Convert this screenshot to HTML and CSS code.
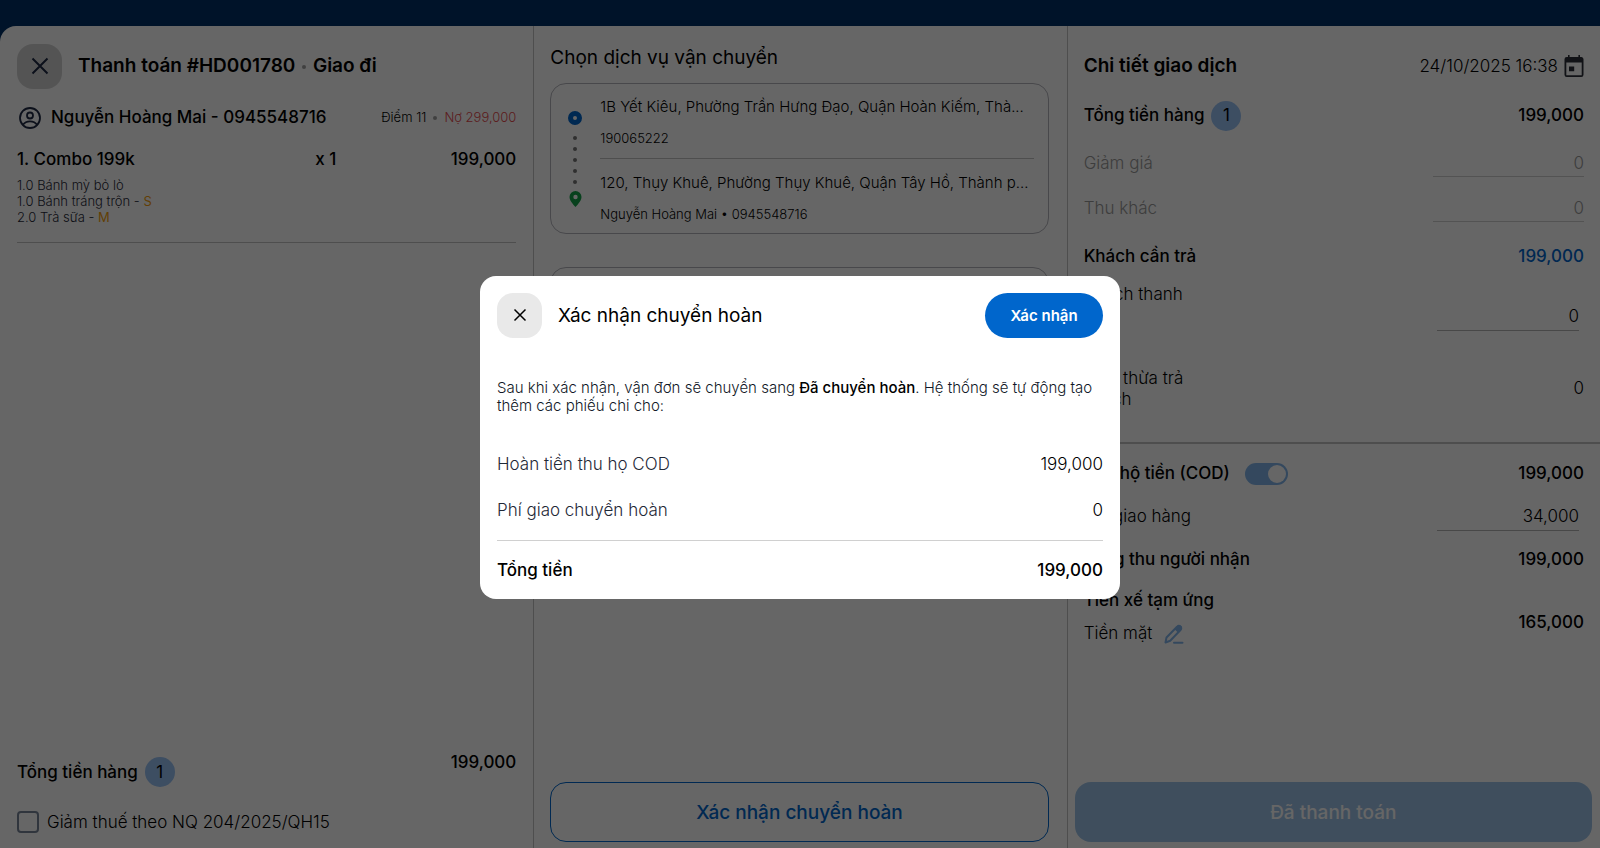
FILE: index.html
```html
<!DOCTYPE html>
<html lang="vi">
<head>
<meta charset="utf-8">
<meta name="viewport" content="width=device-width, initial-scale=1">
<title>Thanh toán #HD001780</title>
<link rel="stylesheet" href="styles.css">
</head>
<body>
<main class="sheet">
  <section class="col order">
    <header class="head">
      <button class="close" type="button" aria-label="Đóng"><svg width="20" height="20" viewBox="0 0 20 20"><path d="M2.500 2.500l15 15M17.500 2.500l-15 15"/></svg></button>
      <h1 class="title">Thanh toán #HD001780 <span class="dot"></span> Giao đi</h1>
    </header>
    <div class="customer">
      <svg class="user" width="24" height="24" viewBox="0 0 24 24"><circle cx="12" cy="12" r="10"/><circle cx="12" cy="9.500" r="3"/><path d="M5 18.800c1.500-2.300 4-3.400 7-3.400s5.500 1.100 7 3.400"/></svg>
      <span class="name">Nguyễn Hoàng Mai - 0945548716</span>
      <span class="points">Điểm 11</span><span class="dot small-dot"></span><span class="debt">Nợ 299,000</span>
    </div>
    <div class="item">
      <span>1. Combo 199k</span><span>x 1</span><span class="num">199,000</span>
    </div>
    <ul class="parts">
      <li>1.0 Bánh mỳ bỏ lò</li>
      <li>1.0 Bánh tráng trộn - <b>S</b></li>
      <li>2.0 Trà sữa - <b>M</b></li>
    </ul>
    <footer class="order-foot">
      <div class="sum"><span>Tổng tiền hàng</span><span class="badge">1</span><span class="sum-value">199,000</span></div>
      <label class="tax"><input type="checkbox"> Giảm thuế theo NQ 204/2025/QH15</label>
    </footer>
  </section>

  <section class="col ship">
    <h2 class="ship-title">Chọn dịch vụ vận chuyển</h2>
    <div class="card route">
      <div class="track">
        <span class="from"></span>
        <i></i><i></i><i></i><i></i><i></i>
        <svg width="13" height="16" viewBox="0 0 13 16"><path d="M6.500 0A6 6 0 0 0 .5 6c0 4.300 6 10 6 10s6-5.700 6-10a6 6 0 0 0-6-6zm0 8.200a2.200 2.200 0 1 1 0-4.400 2.200 2.200 0 0 1 0 4.400z"/></svg>
      </div>
      <div class="stops">
        <div class="stop">
          <p class="address">1B Yết Kiêu, Phường Trần Hưng Đạo, Quận Hoàn Kiếm, Thà...</p>
          <p class="contact">190065222</p>
        </div>
        <div class="stop">
          <p class="address">120, Thụy Khuê, Phường Thụy Khuê, Quận Tây Hồ, Thành p...</p>
          <p class="contact">Nguyễn Hoàng Mai • 0945548716</p>
        </div>
      </div>
    </div>
    <div class="card service"></div>
    <button class="action outline" type="button">Xác nhận chuyển hoàn</button>
  </section>

  <section class="col detail">
    <header class="head">
      <h2 class="title">Chi tiết giao dịch</h2>
      <span class="date">24/10/2025 16:38</span>
      <svg class="calendar" width="20" height="22" viewBox="0 0 20 22"><path fill-rule="evenodd" d="M4 0h1.600v2h8.800V0H16v2h1.500A2.200 2.200 0 0 1 19.500 4.200v15.600a2.200 2.200 0 0 1-2.200 2.200H2.700A2.200 2.200 0 0 1 .5 19.800V4.200A2.200 2.200 0 0 1 2.700 2H4zM2.300 7.500v12.700h15.400V7.500zM5 11.500h5.200v4.700H5z"/></svg>
    </header>
    <div class="row tall strong"><span>Tổng tiền hàng</span><span class="badge">1</span><output>199,000</output></div>
    <div class="row muted"><label for="discount">Giảm giá</label><input id="discount" class="wide" value="0"></div>
    <div class="row muted"><label for="other">Thu khác</label><input id="other" class="wide" value="0"></div>
    <div class="row tall strong"><span>Khách cần trả</span><output class="blue">199,000</output></div>
    <div class="row paid"><label for="paid">Khách thanh toán</label><input id="paid" value="0"></div>
    <div class="row change"><span class="wrap">Tiền thừa trả khách</span><output>0</output></div>
    <hr>
    <div class="row strong"><label for="cod">Thu hộ tiền (COD)</label><input id="cod" class="switch" type="checkbox" role="switch" checked><output>199,000</output></div>
    <div class="row"><label for="fee">Phí giao hàng</label><input id="fee" value="34,000"></div>
    <div class="row strong"><span>Tổng thu người nhận</span><output>199,000</output></div>
    <div class="row driver">
      <div><p class="strong">Tiền xế tạm ứng</p>
      <p class="cash">Tiền mặt <svg width="20" height="20" viewBox="0 0 20 20"><path d="M1.500 18.500l1-5L13 2.800c1-1.100 2.500-1.200 3.500-.3s1 2.400 0 3.500L6.200 16.800zM10 18.700h8.500"/><path class="tip" d="M10.500 5.200L13.500 2c1-1.100 2.500-1.100 3.600-.1s1.100 2.600.1 3.600L14.200 8.700z"/></svg></p></div>
      <output class="strong">165,000</output>
    </div>
    <button class="action done" type="button" disabled>Đã thanh toán</button>
  </section>
</main>

<div class="overlay">
  <section class="modal" role="dialog" aria-modal="true" aria-labelledby="modal-title">
    <header class="modal-head">
      <button class="close" type="button" aria-label="Đóng"><svg width="16" height="16" viewBox="0 0 16 16"><path d="M2.500 2.500l11 11M13.500 2.500l-11 11"/></svg></button>
      <h2 id="modal-title">Xác nhận chuyển hoàn</h2>
      <button class="confirm" type="button">Xác nhận</button>
    </header>
    <p class="note">Sau khi xác nhận, vận đơn sẽ chuyển sang <b>Đã chuyển hoàn</b>. Hệ thống sẽ tự động tạo thêm các phiếu chi cho:</p>
    <div class="line"><span>Hoàn tiền thu họ COD</span><output>199,000</output></div>
    <div class="line"><span>Phí giao chuyển hoàn</span><output>0</output></div>
    <div class="line total"><span>Tổng tiền</span><output>199,000</output></div>
  </section>
</div>
</body>
</html>
```
FILE: styles.css
```css
* { box-sizing: border-box; margin: 0; padding: 0; }
body {
  display: flex;
  flex-direction: column;
  min-height: 100vh;
  padding-top: 26px;
  background: #003166;
  color: #000;
  font: 350 17px/21px Inter, sans-serif;
}
button, input { font: inherit; color: inherit; }
svg { fill: none; flex: none; }

.sheet {
  flex: 1;
  display: grid;
  grid-template-columns: repeat(3, 1fr);
  background: #fff;
  border-radius: 16px 0 0 0;
}
.col { display: flex; flex-direction: column; min-width: 0; padding: 16px 16px 6px; }
.col + .col { border-left: 1px solid #c4c4c4; }
.order { padding-left: 17px; padding-right: 17px; }
.ship { padding-right: 18px; }

.head { display: flex; align-items: center; height: 48px; }
.title { font-size: 19px; font-weight: 600; line-height: 24px; }
.close {
  display: grid;
  place-items: center;
  width: 45px;
  height: 45px;
  margin-right: 16px;
  border: 0;
  border-radius: 16px;
  background: #e9e9e9;
}
.order .close { background: #d3d3d3; }
.close svg { stroke: #000; stroke-width: 1.5; }
.order .close svg { stroke: #1f2a44; stroke-width: 2; }
.dot { display: inline-block; width: 4px; height: 4px; margin: 0 2px; border-radius: 50%; background: #a0a0a0; vertical-align: middle; }

.customer { display: flex; align-items: center; height: 55px; font-size: 13px; font-weight: 300; }
.user { margin: 0 9px 0 1px; stroke: #1f2a44; stroke-width: 1.8; }
.name { flex: 1; font-size: 17px; font-weight: 500; }
.small-dot { margin: 0 7px; }
.debt { color: #e5484d; }
.item { display: grid; grid-template-columns: 1fr auto 180px; height: 28px; align-items: center; font-weight: 500; }
.num { text-align: right; }
.parts { list-style: none; padding: 4px 0 17px; border-bottom: 1px solid #c4c4c4; color: #1f2937; font-size: 13px; font-weight: 300; line-height: 16px; }
.parts b { color: #f59e0b; font-weight: 400; }
.order-foot { margin-top: auto; font-weight: 500; }
.sum { display: flex; align-items: center; height: 50px; }
.badge { display: grid; place-items: center; width: 30px; height: 30px; margin-left: 7px; border-radius: 50%; background: #99c2f5; font-weight: 400; }
.sum-value { align-self: flex-start; margin-left: auto; padding-top: 5px; }
.tax { display: flex; align-items: center; gap: 8px; height: 50px; margin-bottom: -5px; font-weight: 350; }
.tax input { appearance: none; width: 22px; height: 22px; border: 2px solid #79869a; border-radius: 4px; }

.ship-title { padding-top: 4px; font-size: 19px; font-weight: 400; line-height: 24px; }
.card { border: 1px solid #b4b4bc; border-radius: 16px; }
.route { display: flex; margin-top: 13px; padding: 12px 14px 9px 17px; }
.track { display: flex; flex-direction: column; align-items: center; width: 14px; margin-right: 18px; padding-top: 15px; }
.from { width: 14px; height: 14px; margin-bottom: 7px; border: 5px solid #0066cc; border-radius: 50%; }
.track i { width: 4px; height: 4px; margin: 4px 0 3px; border-radius: 50%; background: #777; }
.track svg { margin-top: 4px; fill: #16a34a; }
.stops { flex: 1; min-width: 0; }
.stop + .stop { margin-top: 10px; padding-top: 13px; border-top: 1px solid #c4c4c4; }
.address { overflow: hidden; white-space: nowrap; text-overflow: ellipsis; font-size: 15px; line-height: 22px; }
.contact { margin-top: 10px; font-size: 13px; font-weight: 300; line-height: 20px; }
.service { height: 120px; margin-top: 33px; }

.action { height: 60px; margin-top: auto; border-radius: 16px; font-size: 19px; font-weight: 500; }
.outline { border: 1px solid #0066cc; background: transparent; color: #0066cc; }
.done { margin-left: -9px; margin-right: -8px; border: 0; background: #9fc4e8; color: #fff; }

.date { margin-left: auto; }
.calendar { margin-left: 6px; fill: #2b2f38; }
.row { display: flex; align-items: center; min-height: 43px; }
.row output, .row > input:not(.switch) { margin-left: auto; }
.row input:not(.switch) { width: 142px; height: 29px; margin-right: 5px; border: 0; border-bottom: 1px solid #b4b4b4; background: transparent; text-align: right; }
.row input.wide { width: 151px; margin-right: 0; }
.tall { min-height: 51px; }
.strong { font-weight: 500; }
.muted { min-height: 45px; color: #999; }
.muted input:not(.switch) { height: 26px; border-color: #d0d0d0; }
.blue { color: #0066cc; }
.paid { min-height: 68px; }
.paid label { width: 110px; min-height: 65px; }
.change { min-height: 77px; }
.wrap { width: 110px; }
hr { margin: 15px -18px 8px -16px; border: 0; border-top: 2px solid #c4c4c4; }
.detail hr { margin-right: -16px; }
.switch { appearance: none; width: 43px; height: 22px; margin-left: 15px; padding: 2px; border-radius: 11px; background: #82b5ea; }
.switch::before { content: ""; display: block; width: 18px; height: 18px; margin-left: auto; border-radius: 50%; background: #fff; }
.driver { min-height: 82px; }
.driver > div { padding-bottom: 10px; }
.cash { display: flex; align-items: center; gap: 12px; margin-top: 12px; }
.cash svg { stroke: #82b5ea; stroke-width: 2; stroke-linejoin: round; stroke-linecap: round; }
.cash .tip { fill: #82b5ea; stroke: none; }

.overlay {
  position: fixed;
  inset: 0;
  display: grid;
  place-items: center;
  padding-top: 26px;
  background: rgba(0, 0, 0, .6);
}
.modal { width: 40%; min-width: 480px; padding: 17px 17px 4px; border-radius: 16px; background: #fff; }
.modal-head { display: flex; align-items: center; }
.modal-head h2 { padding-top: 2px; font-size: 19px; font-weight: 400; line-height: 24px; }
.confirm { width: 118px; height: 45px; margin-left: auto; border: 0; border-radius: 23px; background: #0066cc; color: #fff; font-size: 15px; font-weight: 600; }
.note { padding: 41px 0 27px; color: #111827; font-size: 15px; font-weight: 300; line-height: 18px; }
.note b { color: #000; font-weight: 500; }
.line { display: flex; align-items: center; justify-content: space-between; height: 46px; color: #1f2937; }
.line output { color: #000; font-weight: 300; }
.total, .total output { color: #000; font-weight: 500; }
.total { height: 55px; margin-top: 6px; padding-top: 6px; border-top: 1px solid #d0d0d0; }
```
